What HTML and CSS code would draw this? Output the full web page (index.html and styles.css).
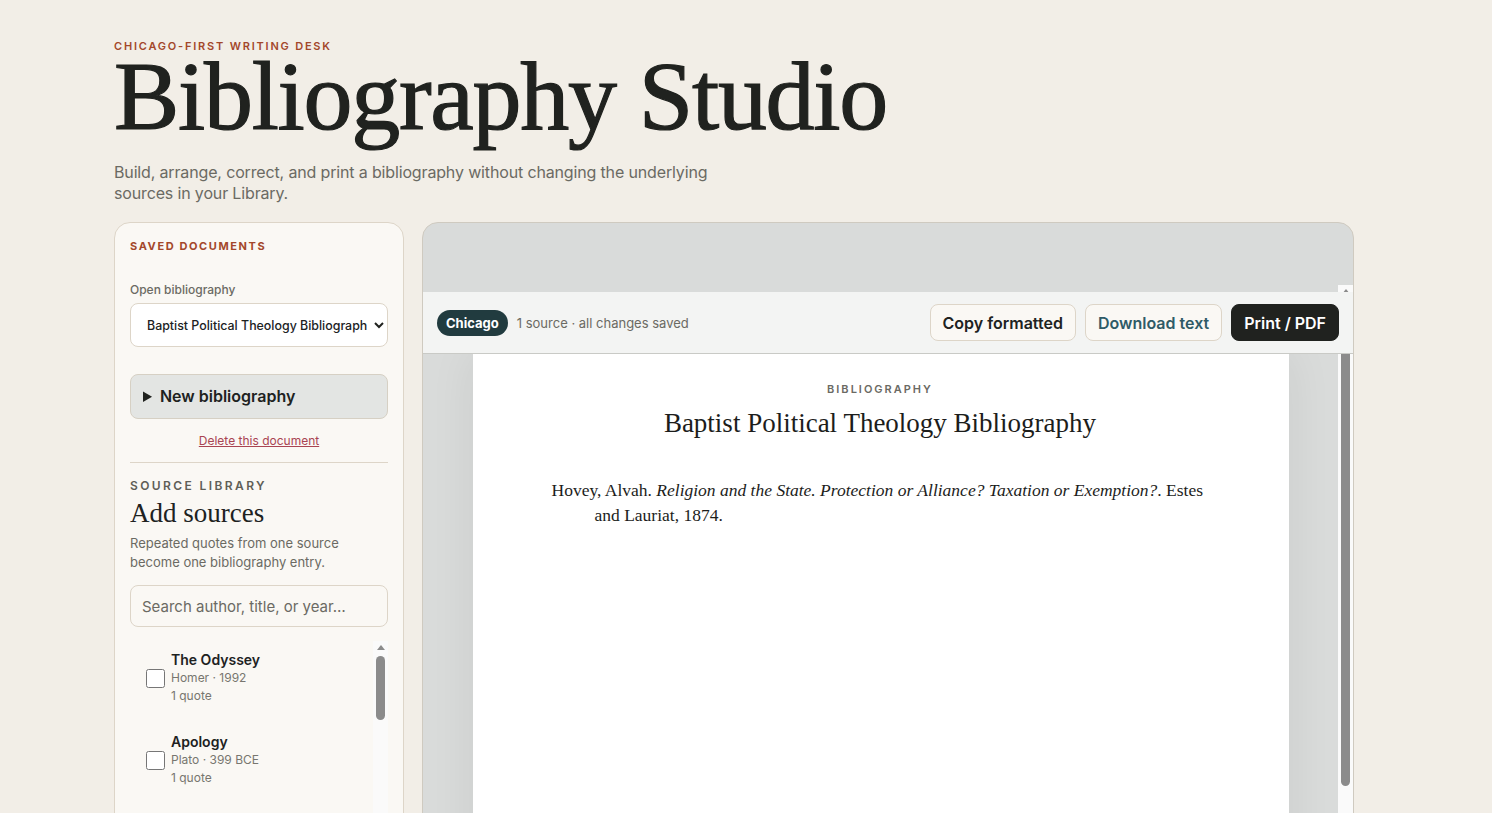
FILE: index.html
```html
<!DOCTYPE html>
<html lang="en">

<head>
  <meta charset="UTF-8">
  <meta name="viewport" content="width=device-width, initial-scale=1.0">
  <title>Bibliography Studio</title>
  <link rel="stylesheet" href="styles.css">
</head>

<body>
  <header class="masthead">
    <p class="eyebrow">Chicago-first writing desk</p>
    <h1 class="title">Bibliography Studio</h1>
    <p class="lede">Build, arrange, correct, and print a bibliography without changing the underlying sources in your Library.</p>
  </header>

  <main class="workspace">
    <aside class="sidebar">
      <section class="saved">
        <h2 class="kicker">Saved documents</h2>
        <label class="field-label" for="doc-picker">Open bibliography</label>
        <select id="doc-picker" class="select">
          <option>Baptist Political Theology Bibliography</option>
        </select>
        <details class="new-doc">
          <summary>New bibliography</summary>
        </details>
        <button class="link-danger" type="button">Delete this document</button>
      </section>

      <section class="library">
        <p class="section-label">Source library</p>
        <h2 class="section-title">Add sources</h2>
        <p class="hint">Repeated quotes from one source become one bibliography entry.</p>
        <input class="search" type="text" placeholder="Search author, title, or year…">
        <div class="list-wrap">
          <ul class="source-list">
            <li class="source">
              <input type="checkbox" class="check">
              <div>
                <p class="source-title">The Odyssey</p>
                <p class="source-meta">Homer · 1992</p>
                <p class="source-meta">1 quote</p>
              </div>
            </li>
            <li class="source">
              <input type="checkbox" class="check">
              <div>
                <p class="source-title">Apology</p>
                <p class="source-meta">Plato · 399 BCE</p>
                <p class="source-meta">1 quote</p>
              </div>
            </li>
            <li class="source">
              <input type="checkbox" class="check" checked>
              <div>
                <p class="source-title">Religion and the State</p>
                <p class="source-meta">Alvah Hovey · 1874</p>
                <p class="source-meta">1 quote</p>
              </div>
            </li>
            <li class="source">
              <input type="checkbox" class="check">
              <div>
                <p class="source-title">The Republic</p>
                <p class="source-meta">Plato · 375 BCE</p>
                <p class="source-meta">2 quotes</p>
              </div>
            </li>
          </ul>
          <div class="rail rail-list" aria-hidden="true">
            <span class="rail-arrow"></span>
            <span class="rail-thumb"></span>
          </div>
        </div>
      </section>
    </aside>

    <section class="preview">
      <div class="toolbar">
        <span class="pill">Chicago</span>
        <span class="status">1 source · all changes saved</span>
        <div class="actions">
          <button class="btn" type="button">Copy formatted</button>
          <button class="btn btn-teal" type="button">Download text</button>
          <button class="btn btn-dark" type="button">Print / PDF</button>
        </div>
      </div>
      <div class="preview-scroll">
        <div class="desk">
          <article class="page">
            <p class="page-kicker">Bibliography</p>
            <h2 class="page-title">Baptist Political Theology Bibliography</h2>
            <p class="entry">Hovey, Alvah. <em>Religion and the State. Protection or Alliance? Taxation or Exemption?</em>. Estes and Lauriat, 1874.</p>
          </article>
        </div>
      </div>
      <div class="rail rail-preview" aria-hidden="true">
        <span class="rail-arrow"></span>
        <span class="rail-thumb"></span>
      </div>
    </section>
  </main>
</body>

</html>
```

FILE: styles.css
```css
* {
  box-sizing: border-box;
}

body {
  margin: 0;
  background: #f2eee7;
  color: #20221f;
  font-family: Inter, "Noto Sans", sans-serif;
}

p {
  margin: 0;
}

.masthead {
  width: 1240px;
  margin-left: 114px;
  padding-top: 40px;
}

.eyebrow {
  font-size: 11px;
  line-height: 13px;
  font-weight: 600;
  letter-spacing: 1.8px;
  text-transform: uppercase;
  color: #a3472b;
}

.title {
  margin: 0;
  font-family: "Liberation Serif", serif;
  font-weight: 400;
  font-size: 98px;
  line-height: 86px;
  letter-spacing: -1.3px;
  color: #20221f;
  -webkit-text-stroke: 1.2px #20221f;
}

.lede {
  max-width: 630px;
  margin-top: 23px;
  font-size: 16px;
  line-height: 21px;
  letter-spacing: -0.15px;
  color: #6b6a63;
}

.workspace {
  display: flex;
  gap: 18px;
  width: 1240px;
  margin: 18px 0 0 114px;
  align-items: flex-start;
}

.sidebar {
  flex: 0 0 290px;
  background: #faf8f4;
  border: 1px solid #ddd5c8;
  border-radius: 16px;
  padding: 16px 15px 40px;
}

.kicker {
  margin: 0;
  font-size: 11px;
  line-height: 14px;
  font-weight: 700;
  letter-spacing: 1.6px;
  text-transform: uppercase;
  color: #a3472b;
}

.field-label {
  display: block;
  margin-top: 29px;
  font-size: 12px;
  font-weight: 500;
  color: #6b6a63;
}

.select {
  display: block;
  width: 100%;
  height: 44px;
  margin-top: 6px;
  padding: 0 4px 0 12px;
  font-family: Inter, sans-serif;
  font-size: 12.4px;
  font-weight: 500;
  color: #20221f;
  background: #fff;
  border: 1px solid #ddd5c8;
  border-radius: 8px;
}

.new-doc {
  margin-top: 27px;
  background: #e3e5e3;
  border: 1px solid #d6d0c4;
  border-radius: 8px;
}

.new-doc summary {
  padding: 11px 12px;
  font-size: 16px;
  line-height: 21px;
  font-weight: 600;
  cursor: pointer;
}

.link-danger {
  display: block;
  margin: 14px auto 0;
  padding: 0;
  border: 0;
  background: none;
  font-family: Inter, sans-serif;
  font-size: 12px;
  color: #a94452;
  text-decoration: underline;
  cursor: pointer;
}

.library {
  margin-top: 14px;
  padding-top: 15px;
  border-top: 1px solid #ddd5c8;
}

.section-label {
  font-size: 12px;
  line-height: 15px;
  font-weight: 600;
  letter-spacing: 2.4px;
  text-transform: uppercase;
  color: #5f5e57;
}

.section-title {
  margin: 4px 0 0;
  font-family: "Liberation Serif", serif;
  font-weight: 400;
  font-size: 27px;
  line-height: 32px;
  color: #20221f;
}

.hint {
  margin-top: 5px;
  font-size: 13px;
  line-height: 19px;
  color: #6b6a63;
}

.search {
  display: block;
  width: 100%;
  height: 42px;
  margin-top: 13px;
  padding: 0 11px;
  font-family: Inter, sans-serif;
  font-size: 15px;
  color: #20221f;
  background: #faf8f4;
  border: 1px solid #ddd5c8;
  border-radius: 8px;
}

.search::placeholder {
  color: #6b6a63;
}

.list-wrap {
  position: relative;
  margin-top: 14px;
  height: 220px;
}

.source-list {
  list-style: none;
  margin: 0;
  padding: 0 15px 0 0;
  height: 100%;
  overflow: hidden;
}

.source {
  display: flex;
  align-items: center;
  gap: 6px;
  padding: 10px 15px 18px 16px;
}

.check {
  width: 19px;
  height: 19px;
  margin: 0;
  flex: none;
}

.source-title {
  font-size: 14px;
  line-height: 18px;
  font-weight: 600;
}

.source-meta {
  font-size: 12px;
  line-height: 18px;
  color: #77766f;
}

/* scrollbar look-alike, the sandbox browser hides real ones */
.rail {
  position: absolute;
  right: 0;
  width: 15px;
  background: #fafafa;
}

.rail-arrow {
  display: block;
  width: 0;
  margin: 4px auto 0;
  border-left: 4px solid transparent;
  border-right: 4px solid transparent;
  border-bottom: 5px solid #8b8b8b;
}

.rail-thumb {
  display: block;
  width: 9px;
  margin: 6px auto 0;
  background: #8b8b8b;
  border-radius: 5px;
}

.rail-list {
  top: 0;
  bottom: 0;
}

.rail-list .rail-thumb {
  height: 64px;
}

.rail-preview {
  top: 62px;
  bottom: 0;
}

.rail-preview .rail-thumb {
  height: 486px;
}

.preview {
  position: relative;
  flex: 1;
  height: 832px;
  background: #d9dbda;
  border: 1px solid #cfcac0;
  border-radius: 16px;
  padding-top: 62px;
  overflow: hidden;
}

/* toolbar floats over the top of the scrolling page area */
.toolbar {
  position: absolute;
  top: 69px;
  left: 0;
  right: 0;
  z-index: 2;
  display: flex;
  align-items: center;
  gap: 9px;
  height: 62px;
  padding: 0 14px;
  background: #f3f4f3;
  border-bottom: 1px solid #c9cac6;
}

.pill {
  padding: 5px 9px;
  border-radius: 14px;
  background: #213b3f;
  color: #fff;
  font-size: 13px;
  line-height: 16px;
  font-weight: 700;
}

.status {
  font-size: 13px;
  color: #6b6a63;
}

.actions {
  display: flex;
  gap: 9px;
  margin-left: auto;
}

.btn {
  height: 37px;
  padding: 0 12px;
  font-family: Inter, sans-serif;
  font-size: 16px;
  font-weight: 600;
  color: #20221f;
  background: #faf8f4;
  border: 1px solid #ddd5c8;
  border-radius: 8px;
  cursor: pointer;
}

.btn-teal {
  color: #2f5b67;
}

.btn-dark {
  background: #20221f;
  border-color: #20221f;
  color: #fff;
}

.preview-scroll {
  height: 100%;
  padding-right: 15px;
  overflow: hidden;
}

.desk {
  display: flex;
  justify-content: center;
  padding: 7px 0 40px;
}

.page {
  width: 816px;
  min-height: 1056px;
  margin-top: 62px;
  padding: 28px 80px 80px 79px;
  background: #fff;
  box-shadow: 0 0 44px rgba(0, 0, 0, 0.07);
}

.page-kicker {
  text-align: center;
  font-size: 11px;
  line-height: 14px;
  font-weight: 600;
  letter-spacing: 2px;
  text-transform: uppercase;
  color: #6b6a63;
}

.page-title {
  margin: 10px 0 0;
  text-align: center;
  font-family: "Liberation Serif", serif;
  font-weight: 400;
  font-size: 27px;
  line-height: 34px;
  color: #1c1d1b;
}

.entry {
  margin-top: 38px;
  padding-left: 43px;
  text-indent: -43px;
  font-family: "Liberation Serif", serif;
  font-size: 17.5px;
  line-height: 25px;
  color: #1c1d1b;
}
```
